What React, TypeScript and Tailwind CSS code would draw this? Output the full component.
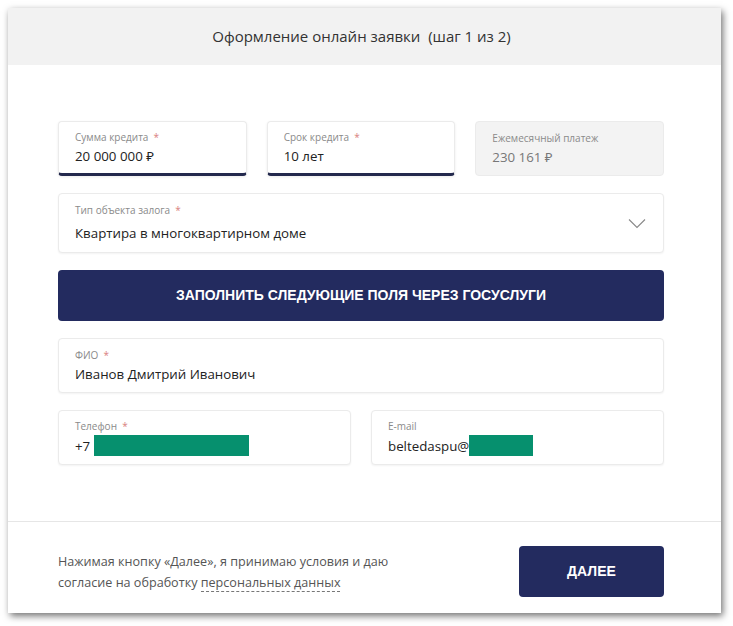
import React from "react";

const font = { fontFamily: '"Open Sans", "Noto Sans", sans-serif' };

function Field({
  label,
  required,
  value,
  variant = "plain",
  children,
}: {
  label: string;
  required?: boolean;
  value?: string;
  variant?: "plain" | "active" | "disabled";
  children?: React.ReactNode;
}) {
  const base =
    "flex flex-col justify-center h-[55px] px-4 rounded-[4px] border border-[#ebebeb]";
  const cls =
    variant === "active"
      ? `${base} bg-white border-b-[3px] border-b-[#23294d] shadow-[0_1px_3px_rgba(0,0,0,0.08)]`
      : variant === "disabled"
      ? `${base} bg-[#f3f3f3]`
      : `${base} bg-white shadow-[0_1px_2px_rgba(0,0,0,0.05)]`;
  return (
    <div className={cls}>
      <div className="text-[10px] leading-[14px] text-[#8a8a8a]">
        {label}
        {required && <span className="text-[#d98080]">&nbsp; *</span>}
      </div>
      <div
        className={`text-[13.3px] leading-[20px] mt-[2px] flex items-center ${
          variant === "disabled" ? "text-[#777]" : "text-[#222]"
        }`}
      >
        {value}
        {children}
      </div>
    </div>
  );
}

export default function App() {
  return (
    <div className="bg-white w-[733px] h-[626px] p-2" style={font}>
      <div className="w-[713px] h-[605px] bg-white shadow-[2px_3px_7px_rgba(0,0,0,0.55)] flex flex-col">
        <div className="h-[57px] bg-[#f2f2f2] flex items-center justify-center text-[15px] text-[#333] pr-[6px]">
          Оформление онлайн заявки&nbsp;&nbsp;(шаг 1 из 2)
        </div>
        <div className="pl-[50px] pr-[57px] pt-[56px] pb-[56px] flex flex-col gap-[17px]">
          <div className="grid grid-cols-3 gap-[20px]">
            <Field label="Сумма кредита" required value="20 000 000 ₽" variant="active" />
            <Field label="Срок кредита" required value="10 лет" variant="active" />
            <Field label="Ежемесячный платеж" value="230 161 ₽" variant="disabled" />
          </div>
          <div className="h-[60px] px-4 rounded-[4px] border border-[#ebebeb] bg-white shadow-[0_1px_2px_rgba(0,0,0,0.05)] flex items-center justify-between">
            <div className="flex flex-col">
              <div className="text-[10px] leading-[14px] text-[#8a8a8a]">
                Тип объекта залога<span className="text-[#d98080]">&nbsp; *</span>
              </div>
              <div className="text-[13.3px] leading-[20px] mt-[6px] text-[#222]">
                Квартира в многоквартирном доме
              </div>
            </div>
            <svg width="18" height="11" viewBox="0 0 18 11" className="mr-[1px]">
              <path d="M1 1.5 L9 9.5 L17 1.5" fill="none" stroke="#888" strokeWidth="1.1" />
            </svg>
          </div>
          <div
            className="h-[51px] rounded-[4px] bg-[#232b5f] flex items-center justify-center text-white font-bold text-[14px] uppercase"
            style={{ fontFamily: '"Liberation Sans", Arial, sans-serif' }}
          >
            Заполнить следующие поля через госуслуги
          </div>
          <Field label="ФИО" required value="Иванов Дмитрий Иванович" />
          <div className="grid grid-cols-2 gap-[20px]">
            <Field label="Телефон" required value="+7">
              <span className="inline-block w-[155px] h-[21px] bg-[#06906e] ml-[4px]" />
            </Field>
            <Field label="E-mail" value="beltedaspu@">
              <span className="inline-block w-[64px] h-[21px] bg-[#06906e]" />
            </Field>
          </div>
        </div>
        <div className="border-t border-[#e6e6e6] flex-1 pl-[50px] pr-[57px] pt-[24px] pb-[16px] flex items-start justify-between">
          <div className="text-[12.6px] leading-[21px] text-[#555] mt-[5px]">
            Нажимая кнопку «Далее», я принимаю условия и даю
            <br />
            согласие на обработку{" "}
            <span className="border-b border-dashed border-[#777]">персональных данных</span>
          </div>
          <div
            className="w-[145px] h-[51px] rounded-[4px] bg-[#232b5f] flex items-center justify-center text-white font-bold text-[14px]"
            style={{ fontFamily: '"Liberation Sans", Arial, sans-serif' }}
          >
            ДАЛЕЕ
          </div>
        </div>
      </div>
    </div>
  );
}
